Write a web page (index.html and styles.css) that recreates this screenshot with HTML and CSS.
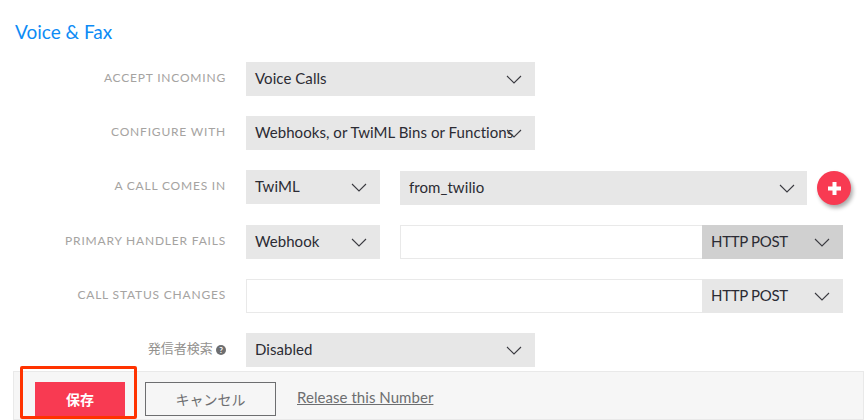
FILE: index.html
```html
<html>
 <head>
  <title>Voice &amp; Fax</title>
  <meta charset="utf-8">
  <link rel="stylesheet" href="styles.css">
 </head>
 <body>
  <h2>Voice &amp; Fax</h2>
  <div class="form">
   <div class="row">
    <label>ACCEPT INCOMING</label>
    <div class="sel wide"><span>Voice Calls</span><svg viewBox="0 0 16 9"><path d="M1 1l7 7 7-7"/></svg></div>
   </div>
   <div class="row">
    <label>CONFIGURE WITH</label>
    <div class="sel wide"><span>Webhooks, or TwiML Bins or Functions</span><svg class="tight" viewBox="0 0 16 9"><path d="M1 1l7 7 7-7"/></svg></div>
   </div>
   <div class="row tall">
    <label>A CALL COMES IN</label>
    <div class="sel small"><span>TwiML</span><svg viewBox="0 0 16 9"><path d="M1 1l7 7 7-7"/></svg></div>
    <div class="sel fn"><span>from_twilio</span><svg viewBox="0 0 16 9"><path d="M1 1l7 7 7-7"/></svg></div>
    <div class="plus"><svg viewBox="0 0 13 13"><path d="M6.5 0v13M0 6.500h13"/></svg></div>
   </div>
   <div class="row">
    <label>PRIMARY HANDLER FAILS</label>
    <div class="sel small"><span>Webhook</span><svg viewBox="0 0 16 9"><path d="M1 1l7 7 7-7"/></svg></div>
    <div class="url short">
     <div class="blank"></div>
     <div class="sel method dark"><span>HTTP POST</span><svg viewBox="0 0 16 9"><path d="M1 1l7 7 7-7"/></svg></div>
    </div>
   </div>
   <div class="row">
    <label>CALL STATUS CHANGES</label>
    <div class="url long">
     <div class="blank"></div>
     <div class="sel method"><span>HTTP POST</span><svg viewBox="0 0 16 9"><path d="M1 1l7 7 7-7"/></svg></div>
    </div>
   </div>
   <div class="row">
    <label class="jp">発信者検索 <i class="help">?</i></label>
    <div class="sel wide"><span>Disabled</span><svg viewBox="0 0 16 9"><path d="M1 1l7 7 7-7"/></svg></div>
   </div>
  </div>
  <div class="bar">
   <button class="save">保存</button>
   <button class="cancel">キャンセル</button>
   <a href="#">Release this Number</a>
  </div>
  <div class="mark"></div>
 </body>
</html>
```

FILE: styles.css
```css
* {box-sizing:border-box}
html, body {height:420px; overflow:hidden}
body {margin:0; background:#fff; position:relative; font-family:Lato, "Noto Sans CJK JP", sans-serif; color:#2b2b33}
h2 {margin:0; padding:20px 0 0 15px; height:62px; font-size:19px; line-height:24px; font-weight:400; color:#0d8bf5}
.form {display:flex; flex-direction:column; gap:20px}
.row {display:flex; align-items:flex-start; height:34px}
.tall {height:35px}
label {width:226px; margin-right:20px; text-align:right; font-size:12px; line-height:32px; letter-spacing:.8px; color:#a5a3a1}
label.jp {letter-spacing:0; font-size:13px; line-height:30px; color:#94928f}
.help {display:inline-block; width:10px; height:10px; border-radius:50%; background:#6d6e70; color:#fff; font:bold 8px/10px Lato, sans-serif; text-align:center; vertical-align:0}
.sel {display:flex; align-items:center; justify-content:space-between; height:34px; padding:0 13px 2px 9px; background:#e7e7e7; font-size:15px; letter-spacing:.06px; white-space:nowrap}
.sel svg {width:16px; height:9px; flex:none; fill:none; stroke:#3a3a40; stroke-width:1.1; margin-top:2px}
.sel .tight {margin-left:-10px; margin-right:0}
.wide {width:289px}
.small {width:134px; margin-right:20px}
.fn {width:407px; margin-top:1px; padding-right:12px}
.plus {width:34px; height:34px; margin:1px 0 0 10px; border-radius:50%; background:#f83a52; box-shadow:2px 3px 4px #0005; display:flex; align-items:center; justify-content:center}
.plus svg {width:13px; height:13px; fill:none; stroke:#fff; stroke-width:4}
.url {display:flex; height:34px; border:solid #e9e9e9; border-width:1px 0 1px 1px}
.short {width:443px}
.long {width:597px}
.blank {flex:1; background:#fff}
.method {width:141px; height:34px; margin-top:-1px; padding-right:13px; letter-spacing:-.3px}
.dark {background:#d0d0d0}
.bar {position:absolute; left:13px; right:0; top:371px; height:49px; padding:10px 0 0 21px; background:#f6f6f6; border:1px solid #e9e9e9; display:flex; align-items:flex-start; gap:20px}
button {height:34px; border-radius:0; font-size:14px; font-family:"Noto Sans CJK JP", sans-serif}
.save {width:90px; background:#f83a52; color:#fff; font-weight:700; border:none}
.cancel {width:131px; background:none; border:1px solid #6d6e70; color:#6d6e70}
.bar a {font-size:15px; line-height:30px; margin-left:1px; letter-spacing:.05px; color:#6d6e70; text-decoration:underline}
.mark {position:absolute; left:20px; top:366px; width:117px; height:53px; border:3px solid #ff3300; border-radius:2px}
```
